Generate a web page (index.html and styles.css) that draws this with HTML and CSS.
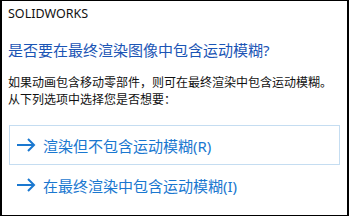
FILE: index.html
```
<!DOCTYPE html>
<html>
<head>
  <title>SOLIDWORKS</title>
  <link rel="stylesheet" href="styles.css">
</head>
<body>
  <div class="dialog">
    <div class="app-name">SOLIDWORKS</div>
    <h1 class="question">是否要在最终渲染图像中包含运动模糊?</h1>
    <p class="info">如果动画包含移动零部件，则可在最终渲染中包含运动模糊。<br>从下列选项中选择您是否想要：</p>
    <div class="choice selected">
      <svg class="arrow" width="19" height="14" viewBox="0 0 19 14">
        <path d="M0 7 H17 M11 1 L17 7 L11 13" fill="none" stroke="#1a78d0" stroke-width="2"/>
      </svg>
      <span>渲染但不包含运动模糊(R)</span>
    </div>
    <div class="choice">
      <svg class="arrow" width="19" height="14" viewBox="0 0 19 14">
        <path d="M0 7 H17 M11 1 L17 7 L11 13" fill="none" stroke="#1a78d0" stroke-width="2"/>
      </svg>
      <span>在最终渲染中包含运动模糊(I)</span>
    </div>
  </div>
</body>
</html>
```

FILE: styles.css
```
body {
  margin: 0;
  background: #fff;
  font-family: "Noto Sans", "Noto Sans CJK SC", sans-serif;
}

.dialog {
  box-sizing: border-box;
  width: 349px;
  height: 216px;
  border: 1px solid #000;
  border-left-width: 2px;
  border-right-width: 2px;
  padding: 5px 7px 0 6px;
}

.app-name {
  font-size: 12.5px;
  line-height: 16px;
  color: #111;
}

.question {
  margin: 17px 0 0 0;
  font-size: 15px;
  font-weight: normal;
  line-height: 22px;
  color: #1b55b5;
}

.info {
  margin: 13px 0 0 0;
  font-size: 12px;
  line-height: 17px;
  color: #111;
}

.choice {
  display: flex;
  align-items: center;
  gap: 7px;
  height: 38px;
  margin-left: 1px;
  padding-left: 7px;
  border: 1px solid transparent;
  font-size: 15px;
  color: #1a78d0;
}

.choice.selected {
  margin-top: 17px;
  border-color: #c5ddf1;
}

.arrow {
  flex: none;
}
```
